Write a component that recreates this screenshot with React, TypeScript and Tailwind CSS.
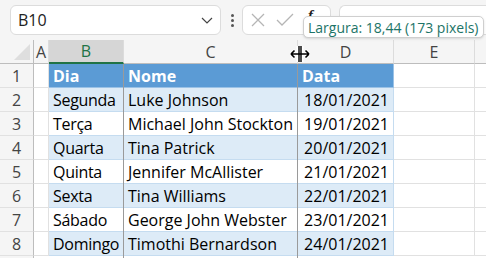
import React from "react";

const ROWS = [
  ["Segunda", "Luke Johnson", "18/01/2021"],
  ["Terça", "Michael John Stockton", "19/01/2021"],
  ["Quarta", "Tina Patrick", "20/01/2021"],
  ["Quinta", "Jennifer McAllister", "21/01/2021"],
  ["Sexta", "Tina Williams", "22/01/2021"],
  ["Sábado", "George John Webster", "23/01/2021"],
  ["Domingo", "Timothi Bernardson", "24/01/2021"],
];

const cell = "h-full border-r border-b flex items-center px-[4px] whitespace-nowrap overflow-hidden";

function RowHead({ n }: { n?: number }) {
  return (
    <div className="w-[34px] h-full shrink-0 bg-[#f5f5f5] border-r border-r-[#bdbdbd] border-b border-b-[#e1e1e1] flex items-center justify-center text-[16px] text-[#444]">
      {n}
    </div>
  );
}

export default function App() {
  return (
    <div
      className="w-[486px] h-[258px] overflow-hidden bg-white relative"
      style={{ fontFamily: '"Open Sans", "Noto Sans", sans-serif' }}
    >
      {/* formula bar */}
      <div className="h-[40px] bg-[#f5f5f5] flex items-center pl-[10px]">
        <div className="w-[211px] h-[30px] bg-white border border-[#dcdcdc] rounded-[6px] flex items-center justify-between pl-[7px] pr-[5px]">
          <span className="text-[16px] text-[#222]">B10</span>
          <svg width="16" height="16" viewBox="0 0 16 16">
            <path d="M3 6l5 5 5-5" fill="none" stroke="#444" strokeWidth="1.2" />
          </svg>
        </div>
        <div className="w-[16px] flex flex-col items-center gap-[2px] ml-[3px]">
          <span className="w-[3px] h-[3px] bg-[#555] rounded-full" />
          <span className="w-[3px] h-[3px] bg-[#555] rounded-full" />
          <span className="w-[3px] h-[3px] bg-[#555] rounded-full" />
        </div>
        <div className="w-[89px] h-[30px] ml-[2px] bg-white border border-[#dcdcdc] rounded-[6px] flex items-center pl-[7px] gap-[10px]">
          <svg width="16" height="16" viewBox="0 0 16 16">
            <path d="M2 2l12 12M14 2L2 14" stroke="#b5b5b5" strokeWidth="1.3" />
          </svg>
          <svg width="18" height="16" viewBox="0 0 18 16">
            <path d="M1 8l5 5L17 2" fill="none" stroke="#b5b5b5" strokeWidth="1.3" />
          </svg>
          <span className="text-[15px] italic font-bold text-[#222] ml-[4px] -mt-[10px]" style={{ fontFamily: '"Liberation Serif", serif' }}>
            f
          </span>
        </div>
        <div className="flex-1 h-[30px] ml-[8px] bg-white border border-[#dcdcdc] rounded-l-[6px] border-r-0" />
      </div>

      {/* column headers */}
      <div className="h-[24px] flex bg-[#f5f5f5] text-[16px] text-[#444]">
        <div className="w-[34px] h-full shrink-0 border-r border-r-[#bdbdbd] border-b border-b-[#bdbdbd] flex items-end justify-end">
          <div className="w-0 h-0 mr-[3px] mb-[3px] border-l-[16px] border-l-transparent border-b-[16px] border-b-[#dedede]" />
        </div>
        <div className="w-[15px] h-full shrink-0 border-r border-[#dcdcdc] border-b border-b-[#bdbdbd] flex items-center justify-center">A</div>
        <div className="w-[75px] h-full shrink-0 bg-[#d6d6d6] border-r border-[#dcdcdc] border-b-[2px] border-b-[#217346] flex items-center justify-center text-[#217346]">B</div>
        <div className="w-[174px] h-full shrink-0 border-r border-[#dcdcdc] border-b border-b-[#bdbdbd] flex items-center justify-center">C</div>
        <div className="w-[96px] h-full shrink-0 border-r border-[#dcdcdc] border-b border-b-[#bdbdbd] flex items-center justify-center">D</div>
        <div className="w-[81px] h-full shrink-0 border-r border-[#dcdcdc] border-b border-b-[#bdbdbd] flex items-center justify-center">E</div>
        <div className="flex-1 h-full border-b border-b-[#bdbdbd]" />
      </div>

      {/* header row */}
      <div className="h-[24px] flex text-[16px]">
        <RowHead n={1} />
        <div className="w-[15px] shrink-0 h-full border-r border-b border-[#e1e1e1]" />
        <div className={`${cell} w-[75px] shrink-0 bg-[#5b9bd5] border-[#9bc2e6] text-white font-bold`}>Dia</div>
        <div className={`${cell} w-[174px] shrink-0 bg-[#5b9bd5] border-[#9bc2e6] text-white font-bold`}>Nome</div>
        <div className={`${cell} w-[96px] shrink-0 bg-[#5b9bd5] border-[#9bc2e6] text-white font-bold`}>Data</div>
        <div className="w-[81px] shrink-0 h-full border-r border-b border-[#e1e1e1]" />
        <div className="flex-1 h-full border-b border-[#e1e1e1]" />
      </div>

      {ROWS.map((r, i) => {
        const bg = i % 2 === 0 ? "bg-[#ddebf7]" : "bg-white";
        return (
          <div key={i} className="h-[24px] flex text-[16px] text-black">
            <RowHead n={i + 2} />
            <div className="w-[15px] shrink-0 h-full border-r border-b border-[#e1e1e1]" />
            <div className={`${cell} w-[75px] shrink-0 ${bg} border-[#c5dcf0] tracking-[-0.3px]`}>{r[0]}</div>
            <div className={`${cell} w-[174px] shrink-0 ${bg} border-[#c5dcf0]`}>{r[1]}</div>
            <div className={`${cell} w-[96px] shrink-0 ${bg} border-[#c5dcf0] justify-end`}>{r[2]}</div>
            <div className="w-[81px] shrink-0 h-full border-r border-b border-[#e1e1e1]" />
            <div className="flex-1 h-full border-b border-[#e1e1e1]" />
          </div>
        );
      })}
      <div className="h-[24px] flex">
        <RowHead />
      </div>

      {/* guide lines */}
      <div className="absolute left-[123px] top-[64px] bottom-0 w-px bg-[#9a9a9a]" />
      <div className="absolute left-[297px] top-[64px] bottom-0 w-px bg-[#9a9a9a]" />

      {/* resize cursor */}
      <svg className="absolute left-[290px] top-[45px]" width="20" height="18" viewBox="0 0 20 18">
        <path d="M1 9h18M1 9l4-4M1 9l4 4M19 9l-4-4M19 9l-4 4" fill="none" stroke="#fff" strokeWidth="3" />
        <path d="M8 1v16M12 1v16" stroke="#fff" strokeWidth="3" />
        <path d="M1 9h18M1 9l3.5-3.5M1 9l3.5 3.5M19 9l-3.5-3.5M19 9l-3.5 3.5" fill="none" stroke="#000" strokeWidth="1.6" />
        <path d="M9 1v16M11 1v16" stroke="#000" strokeWidth="1.4" />
      </svg>

      {/* tooltip */}
      <div className="absolute left-[303px] top-[16px] h-[22px] px-[4px] bg-white border border-[#cfcfcf] rounded-[5px] shadow-sm flex items-center text-[14px] text-[#1d7467] whitespace-nowrap">
        Largura: 18,44 (173 pixels)
      </div>
    </div>
  );
}
